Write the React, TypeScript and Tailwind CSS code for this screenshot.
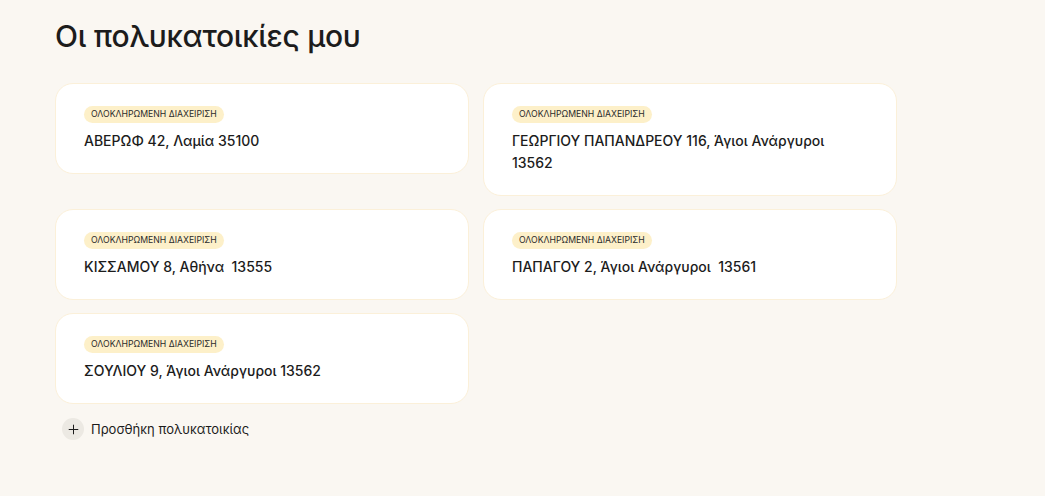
import { Plus } from 'lucide-react'

const buildings = [
  'ΑΒΕΡΩΦ 42, Λαμία 35100',
  'ΓΕΩΡΓΙΟΥ ΠΑΠΑΝΔΡΕΟΥ 116, Άγιοι Ανάργυροι 13562',
  'ΚΙΣΣΑΜΟΥ 8, Αθήνα  13555',
  'ΠΑΠΑΓΟΥ 2, Άγιοι Ανάργυροι  13561',
  'ΣΟΥΛΙΟΥ 9, Άγιοι Ανάργυροι 13562',
]

const BuildingCard = ({ address }: { address: string }) => (
  <div className="bg-white rounded-[18px] border border-[#fbf0d9] pl-[28px] pr-[40px] pt-[22px] pb-[21px]">
    <div className="w-fit flex items-center h-[17px] px-[7px] rounded-full bg-[#fdf0c9] text-[8.7px] leading-none text-[#2b2b2b]">
      ΟΛΟΚΛΗΡΩΜΕΝΗ ΔΙΑΧΕΙΡΙΣΗ
    </div>
    <p className="mt-[7px] text-[14px] leading-[22px] font-medium text-[#1c1c1c] whitespace-pre-wrap">
      {address}
    </p>
  </div>
)

export default function App() {
  return (
    <div
      className="min-h-[496px] bg-[#faf7f2] px-[55px] pt-[16px]"
      style={{ fontFamily: 'Inter, "Noto Sans", sans-serif' }}
    >
      <h1 className="text-[30px] leading-[40px] font-medium text-[#1c1c1c] tracking-[-0.01em]">
        Οι πολυκατοικίες μου
      </h1>
      <div className="mt-[27px] w-[842px] grid grid-cols-2 gap-x-[14px] gap-y-[13px] items-start">
        {buildings.map((b, i) => (
          <BuildingCard key={i} address={b} />
        ))}
      </div>
      <button className="mt-[14px] ml-[7px] flex items-center gap-[7px] text-[13px] leading-[22px] text-[#1c1c1c]">
        <span className="w-[22px] h-[22px] rounded-full bg-[#ece9e3] flex items-center justify-center">
          <Plus className="w-[15px] h-[15px]" strokeWidth={1.6} />
        </span>
        Προσθήκη πολυκατοικίας
      </button>
    </div>
  )
}
